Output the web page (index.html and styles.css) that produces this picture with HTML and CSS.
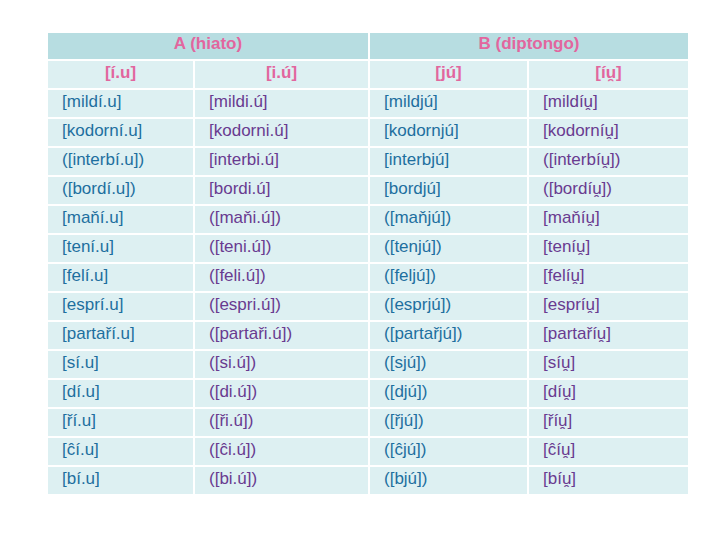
FILE: index.html
```html
<!DOCTYPE html>
<html lang="es">
<head>
<meta charset="utf-8">
<title>Hiato y diptongo</title>
<link rel="stylesheet" href="styles.css">
</head>
<body>
<div class="grid">
  <div class="h1 span2">A (hiato)</div>
  <div class="h1 span2">B (diptongo)</div>
  <div class="h2">[í.u]</div>
  <div class="h2">[i.ú]</div>
  <div class="h2">[jú]</div>
  <div class="h2">[íu̯]</div>

  <div class="c b">[mildí.u]</div><div class="c p">[mildi.ú]</div><div class="c b">[mildjú]</div><div class="c p">[mildíu̯]</div>
  <div class="c b">[kodorní.u]</div><div class="c p">[kodorni.ú]</div><div class="c b">[kodornjú]</div><div class="c p">[kodorníu̯]</div>
  <div class="c b">([interbí.u])</div><div class="c p">[interbi.ú]</div><div class="c b">[interbjú]</div><div class="c p">([interbíu̯])</div>
  <div class="c b">([bordí.u])</div><div class="c p">[bordi.ú]</div><div class="c b">[bordjú]</div><div class="c p">([bordíu̯])</div>
  <div class="c b">[maňí.u]</div><div class="c p">([maňi.ú])</div><div class="c b">([maňjú])</div><div class="c p">[maňíu̯]</div>
  <div class="c b">[tení.u]</div><div class="c p">([teni.ú])</div><div class="c b">([tenjú])</div><div class="c p">[teníu̯]</div>
  <div class="c b">[felí.u]</div><div class="c p">([feli.ú])</div><div class="c b">([feljú])</div><div class="c p">[felíu̯]</div>
  <div class="c b">[esprí.u]</div><div class="c p">([espri.ú])</div><div class="c b">([esprjú])</div><div class="c p">[espríu̯]</div>
  <div class="c b">[partaří.u]</div><div class="c p">([partaři.ú])</div><div class="c b">([partařjú])</div><div class="c p">[partaříu̯]</div>
  <div class="c b">[sí.u]</div><div class="c p">([si.ú])</div><div class="c b">([sjú])</div><div class="c p">[síu̯]</div>
  <div class="c b">[dí.u]</div><div class="c p">([di.ú])</div><div class="c b">([djú])</div><div class="c p">[díu̯]</div>
  <div class="c b">[ří.u]</div><div class="c p">([ři.ú])</div><div class="c b">([řjú])</div><div class="c p">[říu̯]</div>
  <div class="c b">[ĉí.u]</div><div class="c p">([ĉi.ú])</div><div class="c b">([ĉjú])</div><div class="c p">[ĉíu̯]</div>
  <div class="c b">[bí.u]</div><div class="c p">([bi.ú])</div><div class="c b">([bjú])</div><div class="c p">[bíu̯]</div>
</div>
</body>
</html>
```
FILE: styles.css
```css
html, body {
  margin: 0;
  background: #ffffff;
}
body {
  padding: 33px 0 0 48px;
  font-family: "Liberation Sans", Arial, "DejaVu Sans", sans-serif;
  font-size: 17px;
}
.grid {
  display: grid;
  grid-template-columns: 145px 173px 157px 159px;
  grid-auto-rows: 27px;
  grid-template-rows: 26px 27px;
  gap: 2px;
  width: 640px;
}
.span2 {
  grid-column: span 2;
}
.h1 {
  background: #b7dde1;
  color: #e2669e;
  font-weight: bold;
  display: flex;
  align-items: center;
  justify-content: center;
  padding-bottom: 4px;
}
.h2 {
  background: #ddf0f2;
  color: #e2669e;
  font-weight: bold;
  display: flex;
  align-items: center;
  justify-content: center;
  padding-bottom: 3px;
}
.c {
  background: #ddf0f2;
  display: flex;
  align-items: center;
  padding-left: 14px;
  padding-bottom: 4px;
  white-space: nowrap;
}
.b {
  color: #1d6f9f;
}
.p {
  color: #693b90;
}
```
